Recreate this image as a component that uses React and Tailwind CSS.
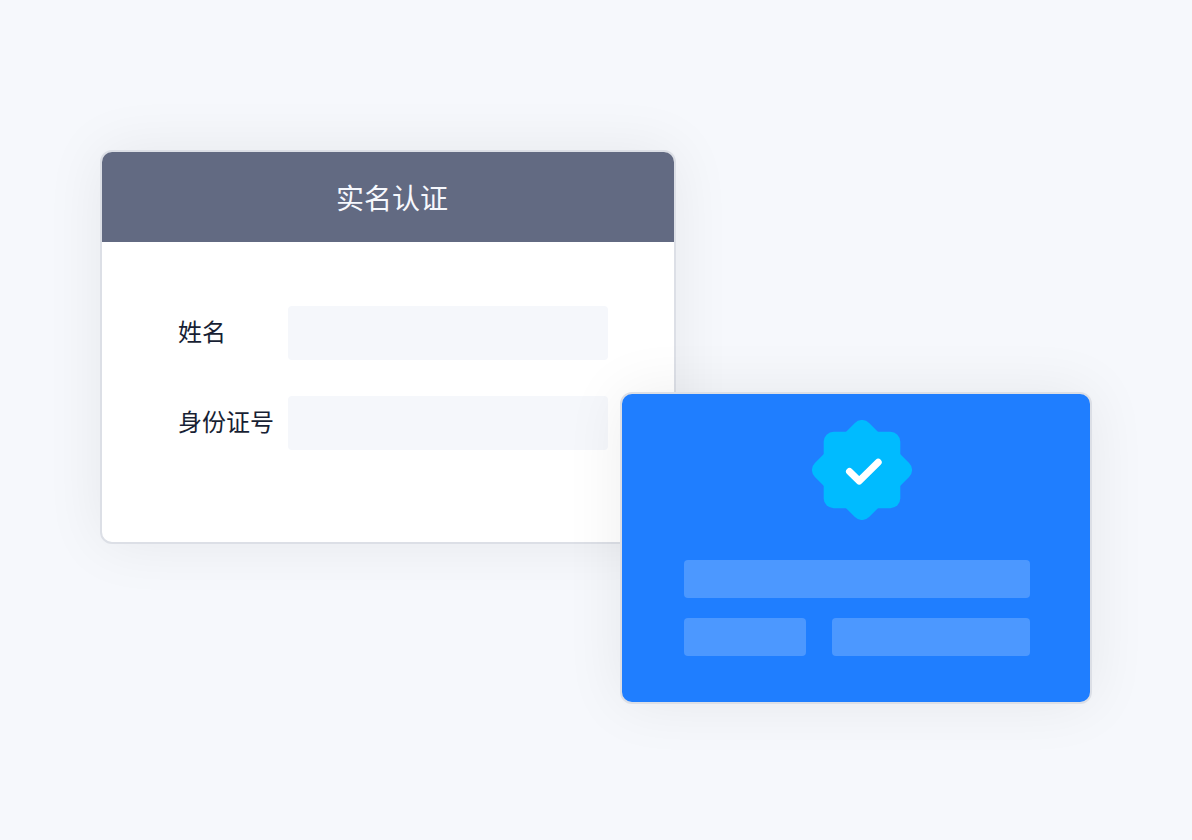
function VerifiedBadge() {
  return (
    <svg viewBox="0 0 100 100" className="size-[100px]" role="img" aria-label="已认证">
      <g fill="#00bbff">
        <rect x="11.7" y="11.7" width="76.6" height="76.6" rx="10" />
        <rect x="11.7" y="11.7" width="76.6" height="76.6" rx="10" transform="rotate(45 50 50)" />
      </g>
      <path
        d="M37.5 51.4 47.2 61 66.2 42.2"
        fill="none"
        stroke="#fff"
        strokeWidth="7"
        strokeLinecap="round"
        strokeLinejoin="round"
      />
    </svg>
  );
}

function Field({ id, label }) {
  return (
    <div className="flex items-center">
      <label htmlFor={id} className="w-[110px] shrink-0 pb-1 text-2xl text-[#181f34]">
        {label}
      </label>
      <input id={id} type="text" className="h-[54px] min-w-0 flex-1 rounded bg-[#f5f7fb] px-4 text-2xl outline-none" />
    </div>
  );
}

export default function App() {
  return (
    <main className="min-h-screen bg-[#f6f8fc] px-[100px] pt-[150px] pb-[136px] font-['Noto_Sans_CJK_SC',sans-serif]">
      <section className="w-full max-w-[576px] overflow-hidden rounded-xl border-2 border-[#dcdfe6] bg-white shadow-[0_0_60px_rgba(0,0,0,0.07)]">
        <h1 className="flex h-[90px] items-center justify-center bg-[#626a82] pr-0 pl-2 text-[28px] font-normal text-[#f6f8fd]">
          实名认证
        </h1>
        <form className="flex flex-col gap-9 pt-16 pr-[66px] pb-[92px] pl-[76px]">
          <Field id="name" label="姓名" />
          <Field id="id-number" label="身份证号" />
        </form>
      </section>

      <section className="relative -mt-[152px] ml-auto w-full max-w-[472px] rounded-xl border-2 border-[#dcdfe6] bg-[#1f7eff] pt-[26px] pr-[60px] pb-[46px] pl-[62px] shadow-[0_0_60px_rgba(0,0,0,0.07)]">
        <div className="flex justify-center pl-[10px]">
          <VerifiedBadge />
        </div>
        <div className="mt-10 h-[38px] rounded bg-[#4c98ff]" />
        <div className="mt-5 flex gap-[26px]">
          <div className="h-[38px] w-[122px] rounded bg-[#4c98ff]" />
          <div className="h-[38px] flex-1 rounded bg-[#4c98ff]" />
        </div>
      </section>
    </main>
  );
}
